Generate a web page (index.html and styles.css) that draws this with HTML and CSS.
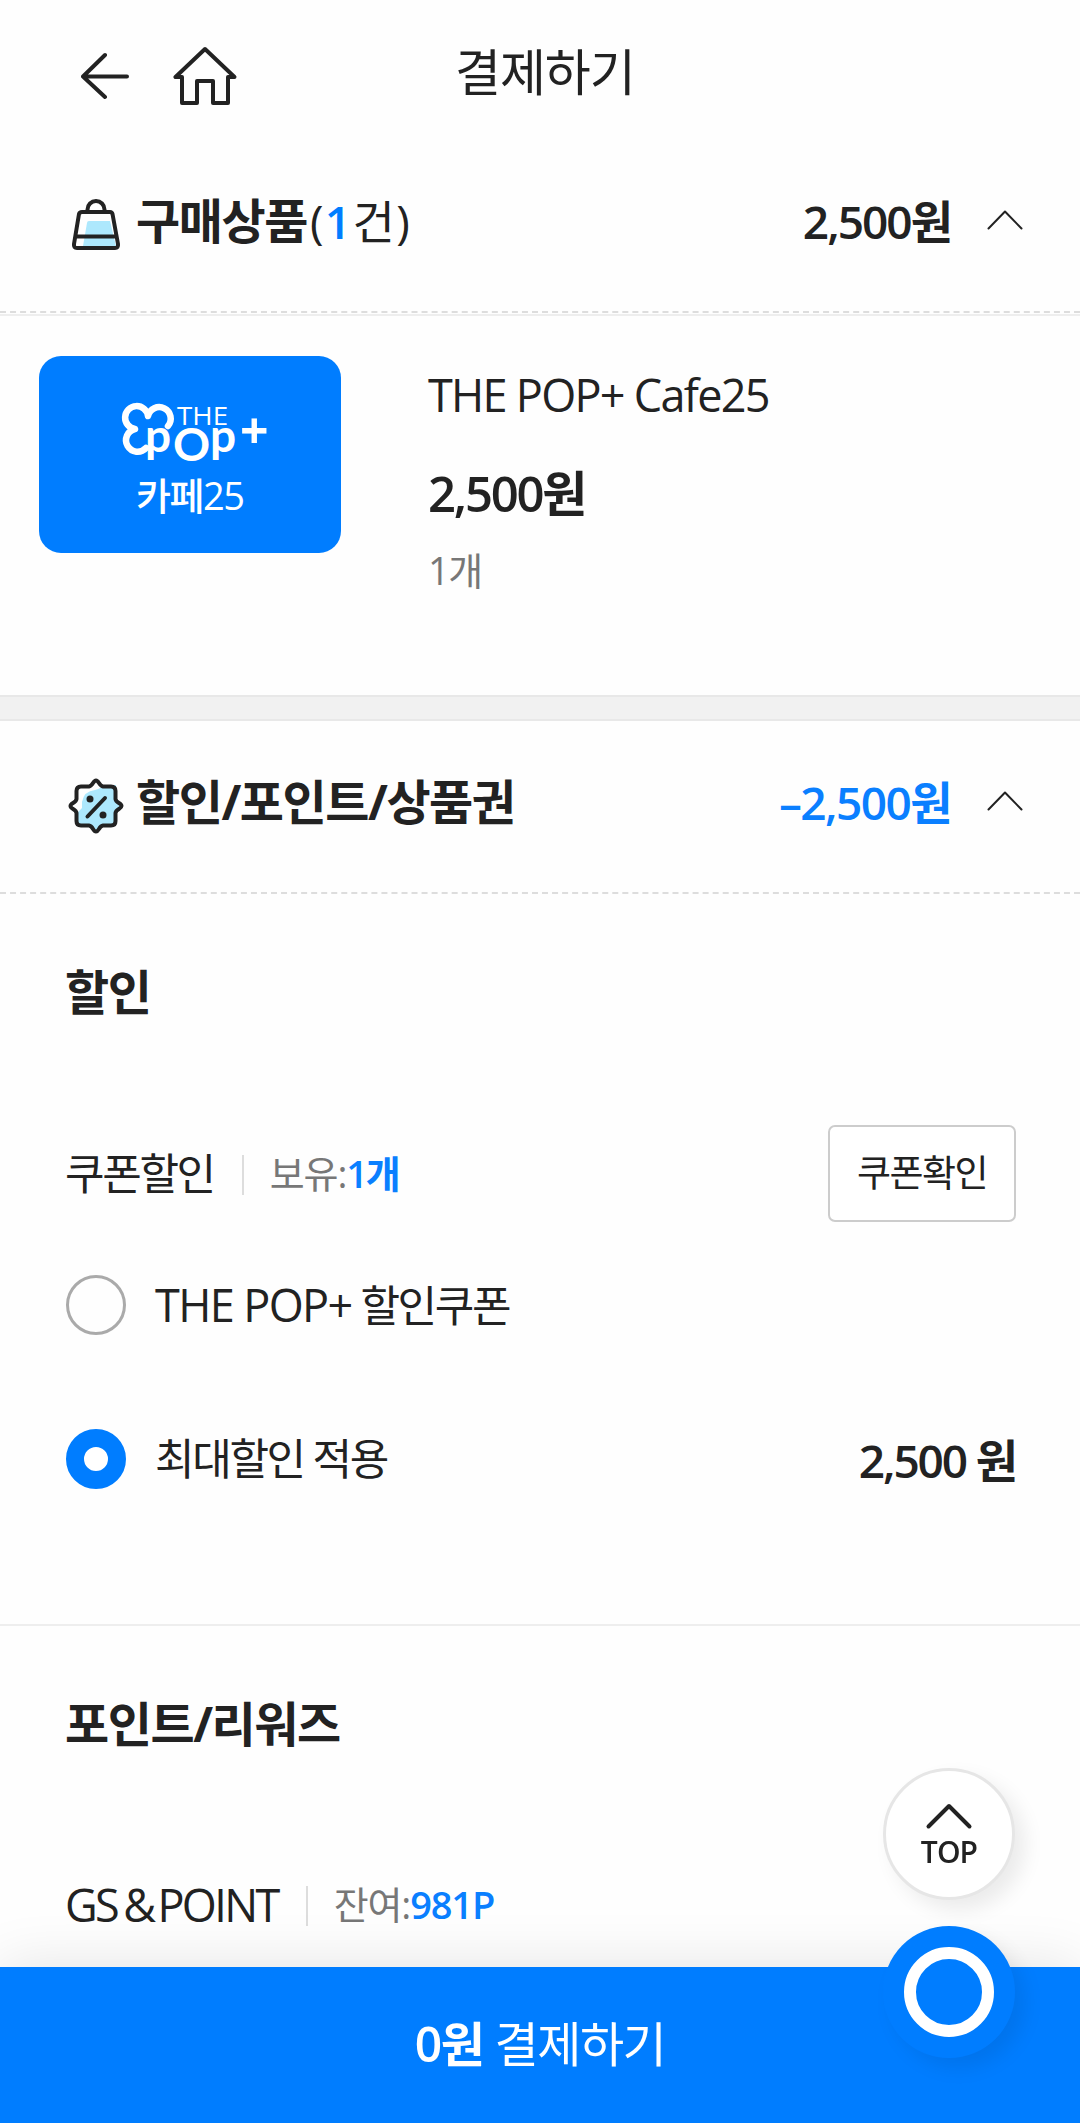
FILE: index.html
```html
<!DOCTYPE html>
<html lang="ko">

<head>
    <meta charset="UTF-8">
    <meta name="viewport" content="width=device-width, initial-scale=1.0">
    <title>결제하기</title>
    <link rel="stylesheet" href="styles.css">
</head>

<body>
    <div class="header">
        <a class="back">
            <svg width="49" height="48" viewBox="0 0 49 48">
                <path d="M24 3L2 24.500L24 45M2 24.500H46" />
            </svg>
        </a>
        <a class="home">
            <svg width="64" height="60" viewBox="0 0 64 60">
                <path d="M32 3L2.500 31H9V57H24V35H40V57H55V31H61.500Z" />
            </svg>
        </a>
        <h1>결제하기</h1>
    </div>

    <!-- 구매상품 -->
    <div class="section-head">
        <svg class="head-icon" width="56" height="56" viewBox="0 0 56 56">
            <path class="fill" d="M19 26Q19 24 21 24H42L48 49H15Z" />
            <path d="M19.500 15V12.500A8.500 8.500 0 0 1 36.500 12.500V15M14 15H42Q44 15 44.500 17L50 47Q50.500 51 47 51H9Q5.500 51 6 47L11 17Q11.500 15 14 15ZM8 39.500H48" />
        </svg>
        <h2>구매상품<span class="count">(<b>1</b>건)</span></h2>
        <span class="amount">2,500원</span>
        <svg class="chevron" width="36" height="22" viewBox="0 0 36 22">
            <path d="M1.500 19.500L18 2.500L34.500 19.500" />
        </svg>
    </div>
    <div class="product">
        <div class="product-img">
            <svg width="302" height="197" viewBox="0 0 302 197">
                <path d="M107 92A11.500 11.500 0 1 1 96 73A11.500 11.500 0 1 1 109 60A11.500 11.500 0 1 1 129 70" />
                <text x="138" y="69" font-size="25" font-weight="400" textLength="51" lengthAdjust="spacingAndGlyphs">THE</text>
                <g class="pop">
                    <text x="106" y="96">p</text>
                    <text x="134" y="105">O</text>
                    <text x="171" y="96">p</text>
                </g>
                <text x="201" y="93" font-size="50" font-weight="700">+</text>
                <text x="97" y="154" font-size="38" font-weight="500" textLength="109">카페25</text>
            </svg>
        </div>
        <div class="product-info">
            <p class="name">THE POP+ Cafe25</p>
            <p class="price">2,500원</p>
            <p class="qty">1개</p>
        </div>
    </div>

    <div class="band"></div>

    <!-- 할인/포인트/상품권 -->
    <div class="section-head">
        <svg class="head-icon" width="56" height="56" viewBox="0 0 56 56">
            <path class="fill" d="M14 24Q16 13 27 12Q34 10 36 7H48V20L53 28L48 36V48H36L28 53L20 48H8V36L14 30Z" />
            <path d="M21 8.500C25 8 25 2.500 28 2.500S31 8 35 8.500H43Q47.500 8.500 47.500 13V21C48 25 53.500 25 53.500 28S48 31 47.500 35V43Q47.500 47.500 43 47.500H35C31 48 31 53.500 28 53.500S25 48 21 47.500H13Q8.500 47.500 8.500 43V35C8 31 2.500 31 2.500 28S8 25 8.500 21V13Q8.500 8.500 13 8.500ZM19.500 38.500L37 20" />
            <circle cx="22" cy="21" r="3.500" />
            <circle cx="35" cy="37" r="3.500" />
        </svg>
        <h2>할인/포인트/상품권</h2>
        <span class="amount blue">–2,500원</span>
        <svg class="chevron" width="36" height="22" viewBox="0 0 36 22">
            <path d="M1.500 19.500L18 2.500L34.500 19.500" />
        </svg>
    </div>

    <div class="box discount">
        <h3>할인</h3>
        <div class="row coupon">
            <span class="label">쿠폰할인</span>
            <span class="remain">보유:<b>1개</b></span>
            <button class="button">쿠폰확인</button>
        </div>
        <div class="row option">
            <span class="radio"></span>
            <span class="label"><span class="en">THE POP+</span> 할인쿠폰</span>
        </div>
        <div class="row option last">
            <span class="radio on"></span>
            <span class="label">최대할인 적용</span>
            <span class="option-price">2,500 원</span>
        </div>
    </div>

    <div class="box point">
        <h3>포인트/리워즈</h3>
        <div class="row">
            <span class="label gs">GS<span class="amp">&amp;</span>POINT</span>
            <span class="remain">잔여:<b>981P</b></span>
        </div>
    </div>

    <div class="pay-bar"><b>0원</b>&nbsp;결제하기</div>

    <div class="floating">
        <a class="top">
            <svg width="48" height="28" viewBox="0 0 48 28">
                <path d="M3.500 24.500L24 4L44.500 24.500" />
            </svg>
            <span>TOP</span>
        </a>
        <a class="circle"></a>
    </div>
</body>

</html>
```
FILE: styles.css
```css
* {
    box-sizing: border-box;
}

body {
    margin: 0;
    height: 2123px;
    overflow: hidden;
    background-color: #fefefe;
    color: #222;
    font-family: "Open Sans", "Noto Sans CJK KR", sans-serif;
}

h1, h2, h3, p {
    margin: 0;
}

b {
    font-weight: 600;
}

svg {
    display: block;
    fill: none;
    stroke: #222;
    stroke-linecap: round;
    stroke-linejoin: round;
}

.header {
    display: flex;
    align-items: center;
    height: 140px;
    padding: 12px 0 0 81px;
}

.header svg {
    stroke-width: 4;
}

.home {
    margin-left: 43px;
}

.header h1 {
    margin-left: 218px;
    padding-bottom: 9px;
    font-size: 50px;
    font-weight: 400;
    line-height: 60px;
    letter-spacing: -0.022em;
}

.section-head {
    display: flex;
    align-items: center;
    height: 173px;
    padding: 0 57px 9px 68px;
    border-bottom: 2px dashed #ddd;
}

.head-icon {
    margin-top: 7px;
    stroke-width: 4;
}

.head-icon .fill {
    fill: #ade8fd;
    stroke: none;
}

.head-icon circle {
    fill: #222;
    stroke: none;
}

.section-head h2 {
    margin-left: 12px;
    font-size: 48px;
    font-weight: 700;
    line-height: 60px;
    letter-spacing: -0.03em;
}

.count {
    margin-left: 3px;
    font-size: 46px;
    font-weight: 400;
    letter-spacing: 0.03em;
}

.count b {
    color: #007dff;
}

.amount {
    margin-left: auto;
    font-size: 46px;
    font-weight: 600;
    line-height: 60px;
    letter-spacing: -0.043em;
}

.blue {
    color: #0a7fff;
    letter-spacing: -0.034em;
}

.chevron {
    margin: -3px 0 0 36px;
    stroke-width: 2;
}

.product {
    display: flex;
    height: 381px;
    margin-top: 1px;
    padding: 40px 39px 0;
    border-top: 2px solid #eee;
}

.product-img {
    width: 302px;
    height: 197px;
    border-radius: 22px;
    background-color: #007dff;
}

.product-img svg {
    stroke: #fff;
    stroke-width: 6.5;
}

.product-img text {
    fill: #fff;
    stroke: none;
}

.pop {
    font-family: Lato, sans-serif;
    font-size: 46px;
    font-weight: 700;
}

.product-info {
    margin-left: 87px;
    line-height: 60px;
}

.name {
    margin-top: 9px;
    font-size: 45px;
    letter-spacing: -0.038em;
}

.price {
    margin-top: 38px;
    font-size: 49px;
    font-weight: 600;
    letter-spacing: -0.045em;
}

.qty {
    margin-top: 17px;
    color: #777;
    font-size: 38px;
    letter-spacing: -0.04em;
}

.band {
    height: 26px;
    border: solid #e8e8e8;
    border-width: 2px 0;
    background-color: #f1f1f1;
}

.box {
    padding: 66px 64px 0 65px;
}

.box h3 {
    font-size: 48px;
    font-weight: 700;
    line-height: 64px;
    letter-spacing: -0.03em;
}

.row {
    display: flex;
    align-items: center;
    height: 60px;
}

.label {
    font-size: 43px;
    line-height: 60px;
    letter-spacing: -0.055em;
}

.en {
    font-size: 45px;
    letter-spacing: -0.036em;
}

.gs {
    padding-top: 2px;
    font-size: 45px;
    letter-spacing: -0.058em;
}

.amp {
    margin: 0 4px 0 6px;
}

.remain {
    position: relative;
    margin-left: 56px;
    color: #777;
    font-size: 38px;
    line-height: 60px;
    letter-spacing: -0.03em;
}

.remain::before {
    content: "";
    position: absolute;
    left: -28px;
    top: 12px;
    width: 2px;
    height: 40px;
    background-color: #ddd;
}

.remain b {
    color: #0a7fff;
    letter-spacing: -0.03em;
}

.coupon {
    height: 97px;
    margin-top: 101px;
}

.coupon .remain {
    bottom: 1px;
}

.coupon .remain b {
    letter-spacing: -0.06em;
}

.button {
    width: 188px;
    height: 97px;
    margin-left: auto;
    padding-bottom: 6px;
    border: 2px solid #ccc;
    border-radius: 7px;
    background-color: #fff;
    color: #222;
    font-family: inherit;
    font-size: 37px;
    letter-spacing: -0.04em;
}

.option {
    margin-top: 53px;
}

.option .label {
    margin-left: 29px;
}

.option.last {
    margin-top: 94px;
}

.radio {
    width: 60px;
    height: 60px;
    margin-left: 1px;
    border: 3px solid #aaa;
    border-radius: 50%;
}

.radio.on {
    border: 18px solid #007dff;
    background-color: #fff;
}

.option-price {
    margin-left: auto;
    padding-top: 2px;
    font-size: 46px;
    font-weight: 600;
    line-height: 60px;
    letter-spacing: -0.046em;
}

.discount {
    height: 730px;
}

.point {
    border-top: 2px solid #eee;
}

.point .row {
    margin-top: 118px;
}

.pay-bar {
    position: fixed;
    left: 0;
    right: 0;
    bottom: 0;
    display: flex;
    justify-content: center;
    height: 156px;
    background-color: #007dff;
    box-shadow: 0 0 60px rgba(0, 0, 0, 0.11);
    color: #fff;
    font-size: 48px;
    line-height: 154px;
    letter-spacing: -0.03em;
}

.floating {
    position: fixed;
    right: 65px;
    bottom: 65px;
}

.top,
.circle {
    display: flex;
    flex-direction: column;
    align-items: center;
    width: 132px;
    height: 132px;
    border-radius: 50%;
    box-shadow: 10px 10px 20px rgba(0, 0, 0, 0.08);
}

.top {
    margin-bottom: 26px;
    padding-top: 31px;
    border: 3px solid #e6e6e6;
    background-color: #fff;
    font-size: 30px;
    font-weight: 600;
    line-height: 44px;
    letter-spacing: -0.03em;
}

.top svg {
    stroke-width: 4;
}

.circle {
    justify-content: center;
    background-color: #007dff;
}

.circle::after {
    content: "";
    width: 66px;
    height: 66px;
    border: 12px solid #fff;
    border-radius: 50%;
}
```
